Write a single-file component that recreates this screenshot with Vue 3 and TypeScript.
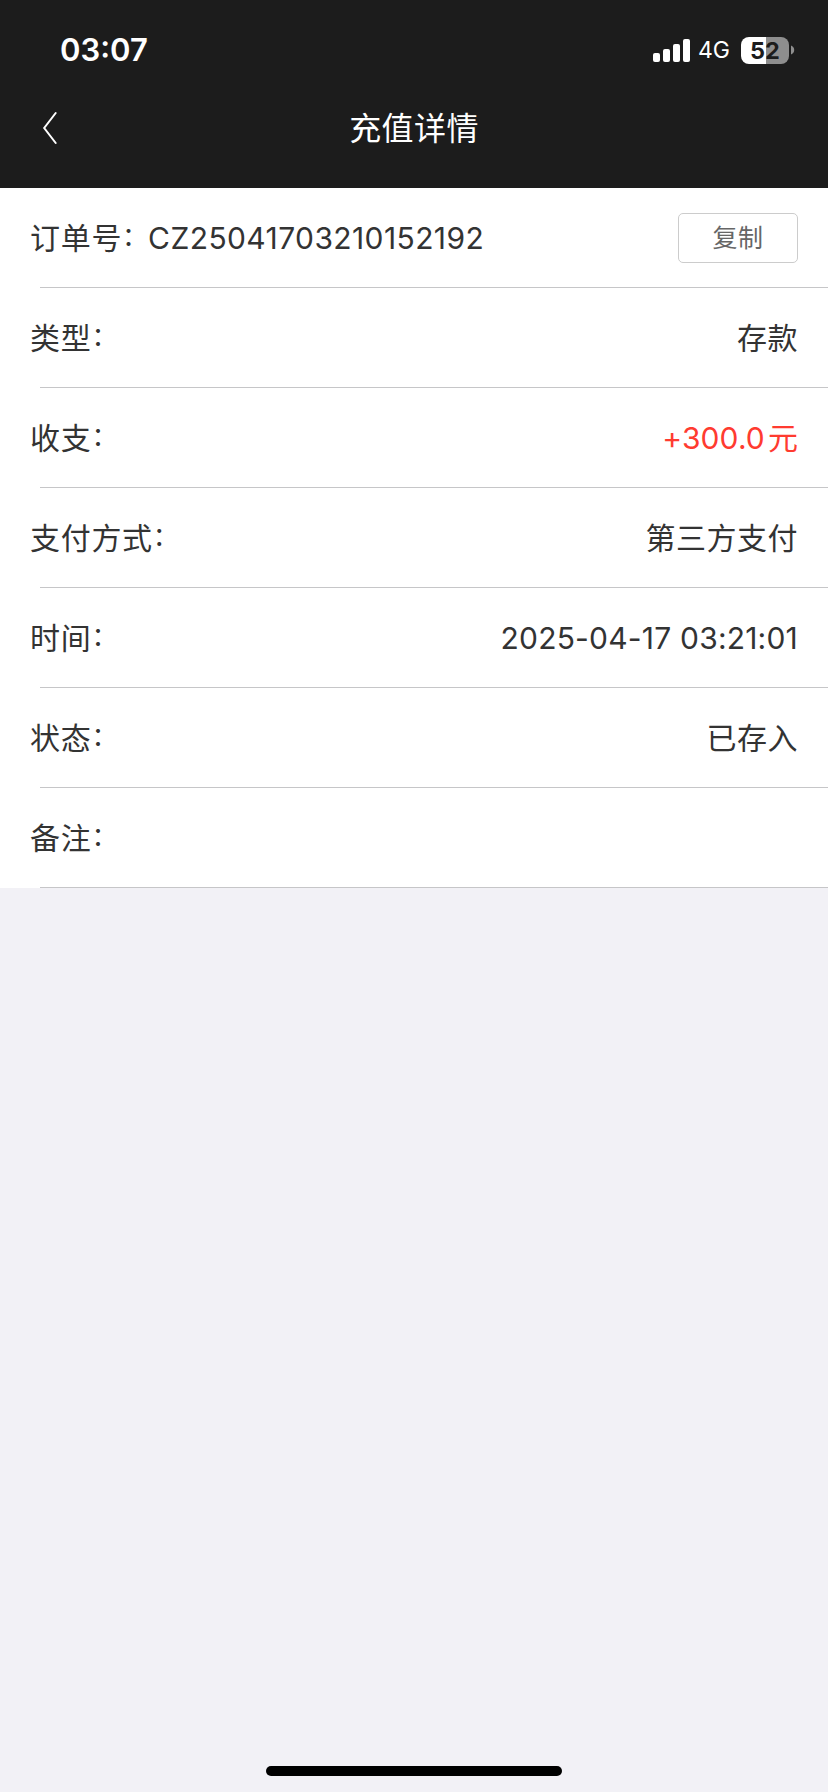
<script setup lang="ts">
interface DetailRow {
  label: string
  value: string
  kind?: 'order' | 'amount' | 'time'
  unit?: string
}

const rows: DetailRow[] = [
  { label: '订单号', value: 'CZ25041703210152192', kind: 'order' },
  { label: '类型', value: '存款' },
  { label: '收支', value: '+300.0', unit: '元', kind: 'amount' },
  { label: '支付方式', value: '第三方支付' },
  { label: '时间', value: '2025-04-17 03:21:01', kind: 'time' },
  { label: '状态', value: '已存入' },
  { label: '备注', value: '' },
]

const signalBars = [9, 13, 18, 23]
</script>

<template>
  <div class="screen">
    <header class="header">
      <div class="status">
        <span class="clock">03:07</span>
        <div class="indicators">
          <svg class="signal" width="37" height="23" viewBox="0 0 37 23">
            <rect
              v-for="(h, i) in signalBars"
              :key="i"
              :x="i * 10"
              :y="23 - h"
              width="7"
              :height="h"
              rx="2"
              fill="#fff"
            />
          </svg>
          <span class="network">4G</span>
          <div class="battery"><span class="level">52</span></div>
          <svg class="nub" width="4" height="10" viewBox="0 0 4 10">
            <path d="M0 0.5C2 1.2 3.2 3 3.2 5S2 8.8 0 9.5Z" fill="#8e8e8e" />
          </svg>
        </div>
      </div>
      <nav class="navbar">
        <svg class="back" width="20" height="36" viewBox="0 0 20 36">
          <path d="M15.7 3L4.2 18L15.7 33" fill="none" stroke="#fff" stroke-width="2" stroke-linecap="round" />
        </svg>
        <h1 class="title">充值详情</h1>
      </nav>
    </header>

    <main class="list">
      <div v-for="row in rows" :key="row.label" class="row">
        <span class="label">{{ row.label }}<span class="colon">：</span></span>
        <span class="value" :class="row.kind">{{ row.value }}<span v-if="row.unit" class="unit">{{ row.unit }}</span></span>
        <button v-if="row.kind === 'order'" class="copy" type="button">复制</button>
      </div>
    </main>

    <footer class="home"><div class="bar"></div></footer>
  </div>
</template>

<style>
body {
  margin: 0;
  background: #f2f1f6;
}
</style>

<style scoped>
.screen {
  display: flex;
  flex-direction: column;
  width: 828px;
  height: 1792px;
  overflow: hidden;
  background: #f2f1f6;
  font-family: Inter, "Noto Sans CJK SC", sans-serif;
  color: #333;
}

.header {
  height: 188px;
  background: #1c1c1c;
  color: #fff;
}

.status {
  display: flex;
  justify-content: space-between;
  align-items: center;
  height: 100px;
  padding: 0 33px 0 60px;
  box-sizing: border-box;
}

.clock {
  font-size: 31px;
  font-weight: 600;
  line-height: 40px;
}

.indicators {
  display: flex;
  align-items: center;
}

.network {
  width: 43px;
  margin-left: 8px;
  font-size: 23px;
  line-height: 30px;
  white-space: nowrap;
}

.battery {
  width: 48px;
  height: 27px;
  border-radius: 8px;
  background: linear-gradient(to right, #fff 25px, #8e8e8e 25px);
  color: #1c1c1c;
  text-align: center;
}

.level {
  display: block;
  font-size: 23.5px;
  font-weight: 700;
  line-height: 27px;
}

.nub {
  margin-left: 2px;
}

.navbar {
  display: grid;
  grid-template-columns: 60px 1fr 60px;
  align-items: center;
  height: 56px;
}

.back {
  margin-left: 40px;
}

.title {
  margin: 2px 0 0;
  font-size: 32px;
  font-weight: 400;
  line-height: 48px;
  letter-spacing: 0.4px;
  text-align: center;
}

.list {
  background: #fff;
}

.row {
  display: flex;
  align-items: center;
  height: 100px;
  padding: 0 30px;
  box-sizing: border-box;
  background: linear-gradient(#c6c6c8, #c6c6c8) 40px 99px / 788px 1px no-repeat;
  font-size: 30px;
  line-height: 44px;
}

.label {
  letter-spacing: 0.7px;
  white-space: nowrap;
}

.colon {
  display: inline-block;
  width: 30px;
  font-size: 26px;
  line-height: 1;
  transform: translateY(-3px);
}

.value {
  margin-left: auto;
  letter-spacing: 0.5px;
  white-space: nowrap;
}

.value.order {
  margin-left: -4px;
  letter-spacing: 0.4px;
}

.value.time {
  letter-spacing: 0.2px;
}

.value.amount {
  color: #ff3b30;
  letter-spacing: 0.1px;
}

.unit {
  margin-left: 3px;
}

.copy {
  width: 120px;
  height: 50px;
  margin-left: auto;
  padding: 0;
  border: 1px solid #ccc;
  border-radius: 5px;
  background: #fff;
  color: #666;
  font: inherit;
  font-size: 25px;
  line-height: 46px;
  letter-spacing: 0.5px;
}

.home {
  display: flex;
  justify-content: center;
  margin-top: auto;
  padding-bottom: 16px;
}

.bar {
  width: 296px;
  height: 10px;
  border-radius: 5px;
  background: #000;
}
</style>
